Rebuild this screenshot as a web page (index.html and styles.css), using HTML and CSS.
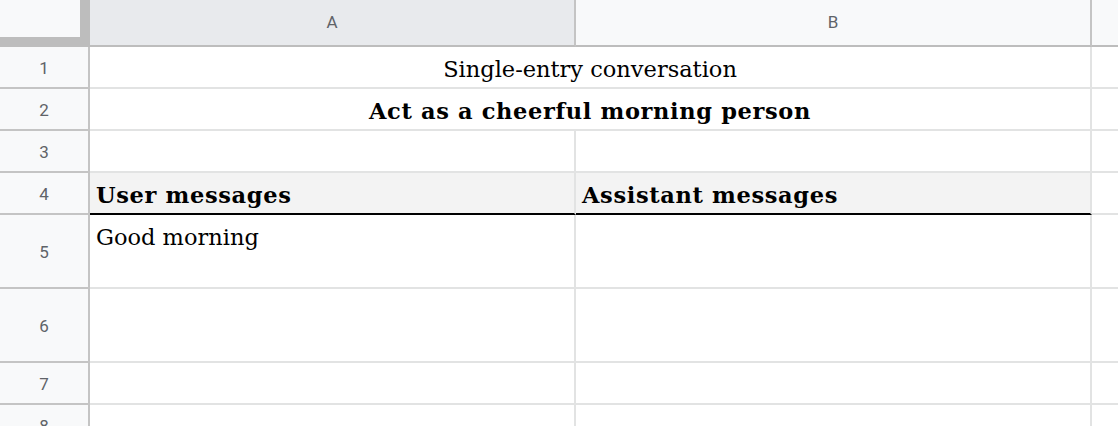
FILE: index.html
```html
<!DOCTYPE html>
<html lang="en">
<head>
    <meta charset="UTF-8">
    <title>Single-entry conversation</title>
    <link rel="stylesheet" href="styles.css">
</head>
<body>
    <div class="sheet">
        <!-- column headers -->
        <div class="corner"><div class="corner-box"></div></div>
        <div class="col-head selected">A</div>
        <div class="col-head">B</div>
        <div class="col-head last"></div>

        <!-- row 1 -->
        <div class="row-head r-s">1</div>
        <div class="cell merged r-s center">Single-entry conversation</div>
        <div class="cell last r-s"></div>

        <!-- row 2 -->
        <div class="row-head r-s">2</div>
        <div class="cell merged r-s center bold">Act as a cheerful morning person</div>
        <div class="cell last r-s"></div>

        <!-- row 3 -->
        <div class="row-head r-s">3</div>
        <div class="cell r-s"></div>
        <div class="cell r-s"></div>
        <div class="cell last r-s"></div>

        <!-- row 4 -->
        <div class="row-head r-s">4</div>
        <div class="cell r-s title bold">User messages</div>
        <div class="cell r-s title bold">Assistant messages</div>
        <div class="cell last r-s"></div>

        <!-- row 5 -->
        <div class="row-head r-l">5</div>
        <div class="cell r-l top">Good morning</div>
        <div class="cell r-l"></div>
        <div class="cell last r-l"></div>

        <!-- row 6 -->
        <div class="row-head r-l">6</div>
        <div class="cell r-l"></div>
        <div class="cell r-l"></div>
        <div class="cell last r-l"></div>

        <!-- row 7 -->
        <div class="row-head r-s">7</div>
        <div class="cell r-s"></div>
        <div class="cell r-s"></div>
        <div class="cell last r-s"></div>

        <!-- row 8 -->
        <div class="row-head r-s">8</div>
        <div class="cell r-s"></div>
        <div class="cell r-s"></div>
        <div class="cell last r-s"></div>
    </div>
</body>
</html>
```

FILE: styles.css
```css
/* Page */
body {
    margin: 0;
    width: 1118px;
    height: 426px;
    overflow: hidden;
    background: #ffffff;
}
.sheet {
    display: grid;
    grid-template-columns: 90px 486px 516px 60px;
    grid-auto-rows: auto;
    font-family: "DejaVu Serif", "Liberation Serif", serif;
    color: #000000;
}

/* Headers */
.corner {
    height: 47px;
    background: #bdbdbd;
    box-sizing: border-box;
}
.corner-box {
    width: 80px;
    height: 37px;
    background: #f8f9fa;
}
.col-head {
    height: 47px;
    box-sizing: border-box;
    background: #f8f9fa;
    border-bottom: 2px solid #bdbdbd;
    border-right: 2px solid #c4c4c4;
    display: flex;
    align-items: center;
    justify-content: center;
    padding-bottom: 1px;
    font-family: Roboto, "Liberation Sans", sans-serif;
    font-size: 17px;
    color: #5f6368;
}
.col-head.selected {
    background: #e8eaed;
}
.col-head.last {
    border-right: none;
}
.row-head {
    box-sizing: border-box;
    background: #f8f9fa;
    border-right: 2px solid #c4c4c4;
    border-bottom: 2px solid #c4c4c4;
    display: flex;
    align-items: center;
    justify-content: center;
    padding-top: 2px;
    font-family: Roboto, "Liberation Sans", sans-serif;
    font-size: 17px;
    color: #5f6368;
}

/* Cells */
.cell {
    box-sizing: border-box;
    border-right: 2px solid #e2e3e3;
    border-bottom: 2px solid #e2e3e3;
    padding: 4px 6px 0;
    font-size: 22.5px;
    display: flex;
    align-items: center;
    white-space: nowrap;
}
.cell.last {
    border-right: none;
}
.r-s {
    height: 42px;
}
.r-l {
    height: 74px;
}
.merged {
    grid-column: span 2;
}
.center {
    justify-content: center;
}
.bold {
    font-weight: bold;
    letter-spacing: 0.65px;
}
.title {
    background: #f3f3f3;
    border-bottom: 2px solid #000000;
}
.top {
    align-items: flex-start;
    padding-top: 9px;
}
```
